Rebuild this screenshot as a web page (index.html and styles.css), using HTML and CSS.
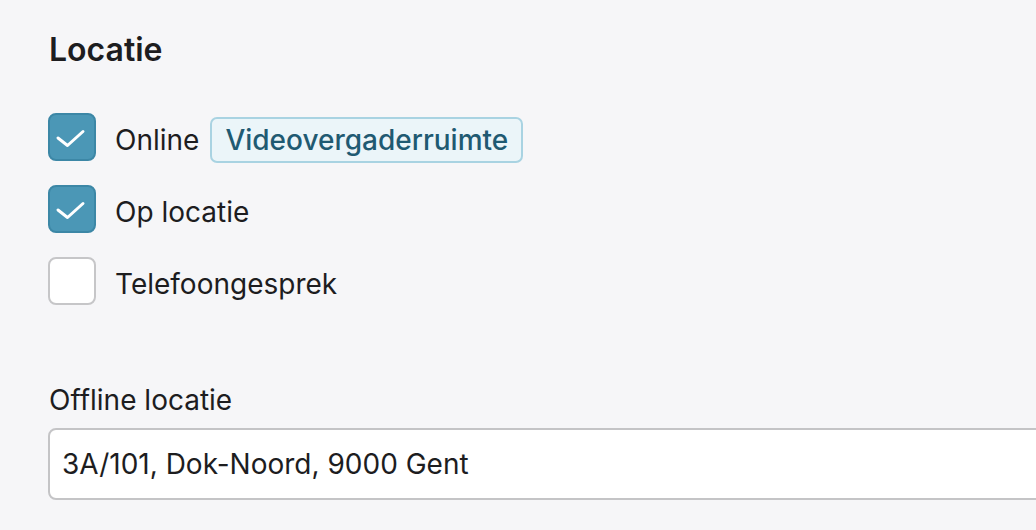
FILE: index.html
```html
<!DOCTYPE html>
<html lang="nl">
<head>
    <meta charset="UTF-8">
    <meta name="viewport" content="width=device-width, initial-scale=1.0">
    <title>Locatie</title>
    <link rel="stylesheet" href="styles.css">
</head>
<body>
    <section class="panel">
        <h2 class="panel-title">Locatie</h2>

        <ul class="options">
            <li class="option">
                <span class="check is-checked">
                    <svg viewBox="0 0 44 44"><polyline points="8,23 17.5,30.5 33,16.5"/></svg>
                </span>
                <span class="option-label">Online</span>
                <span class="badge">Videovergaderruimte</span>
            </li>
            <li class="option">
                <span class="check is-checked">
                    <svg viewBox="0 0 44 44"><polyline points="8,23 17.5,30.5 33,16.5"/></svg>
                </span>
                <span class="option-label">Op locatie</span>
            </li>
            <li class="option">
                <span class="check"></span>
                <span class="option-label">Telefoongesprek</span>
            </li>
        </ul>

        <div class="field">
            <label class="field-label" for="offline">Offline locatie</label>
            <input class="field-input" type="text" id="offline" value="3A/101, Dok-Noord, 9000 Gent">
        </div>
    </section>
</body>
</html>
```

FILE: styles.css
```css
body {
    font-family: Inter, "Noto Sans", sans-serif;
    background-color: #f6f6f8;
    color: #1d1d1f;
    margin: 0;
    overflow: hidden;
}

.panel {
    padding: 30px 0 0 48px;
    width: 1100px;
}

.panel-title {
    font-size: 32px;
    font-weight: 600;
    line-height: 40px;
    margin: 0 0 0 1px;
}

.options {
    list-style: none;
    margin: 43px 0 0;
    padding: 0;
    display: flex;
    flex-direction: column;
    gap: 24px;
}

.option {
    display: flex;
    align-items: center;
    height: 48px;
    font-size: 28px;
}

.option-label {
    margin-top: 6px;
}

.check {
    box-sizing: border-box;
    width: 48px;
    height: 48px;
    border: 2px solid #c6c6c8;
    border-radius: 8px;
    background: #fff;
    margin-right: 19px;
    flex-shrink: 0;
}

.check.is-checked {
    background: #4b97b6;
    border-color: #3c87a6;
}

.check svg {
    display: block;
    width: 44px;
    height: 44px;
}

.check polyline {
    fill: none;
    stroke: #fff;
    stroke-width: 3;
    stroke-linecap: round;
    stroke-linejoin: round;
}

.badge {
    margin: 6px 0 0 11px;
    padding: 0 13px;
    height: 46px;
    line-height: 42px;
    box-sizing: border-box;
    background: #ebf5f9;
    border: 2px solid #a9d3e2;
    border-radius: 7px;
    color: #1f5a72;
    font-weight: 500;
}

.field {
    margin-top: 77px;
}

.field-label {
    display: block;
    font-size: 28px;
    line-height: 36px;
    margin-left: 1px;
    margin-bottom: 10px;
}

.field-input {
    box-sizing: border-box;
    width: 1040px;
    height: 72px;
    padding: 0 12px;
    font-family: inherit;
    font-size: 28px;
    color: #1d1d1f;
    background: #fff;
    border: 2px solid #c4c4c6;
    border-radius: 8px;
    outline: none;
}
```
